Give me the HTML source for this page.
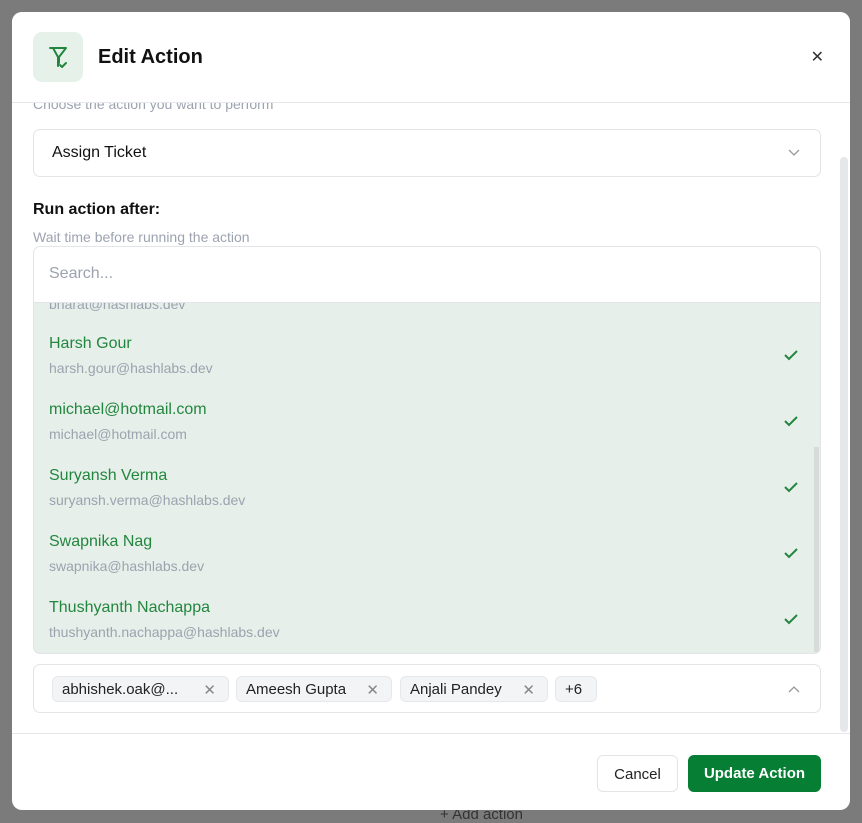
<!DOCTYPE html>
<html><head><style>
*{box-sizing:border-box;margin:0;padding:0}
body{width:862px;height:821px;background:#7b7b7b;font-family:"Liberation Sans",sans-serif;position:relative;overflow:hidden}
.bgt{position:absolute;color:#333;font-size:15px}
.modal{position:absolute;left:12px;top:12px;width:838px;height:798px;background:#fff;border-radius:10px;overflow:hidden}
.hdr{position:absolute;left:0;top:0;width:838px;height:91px;border-bottom:1px solid #e5e7eb;background:#fff;z-index:3}
.ico{position:absolute;left:21px;top:20px;width:50px;height:50px;border-radius:9px;background:#e6f1ea}
.title{position:absolute;left:86px;top:34px;font-size:20px;font-weight:bold;color:#111}
.x{position:absolute;right:26px;top:35px;font-size:16px;color:#333}
.abs{position:absolute}
.sel{left:21px;top:117px;width:788px;height:48px;border:1px solid #e2e4e8;border-radius:7px;font-size:16px;color:#111;padding:14px 18px}
.list{left:21px;top:234px;width:788px;height:408px;border:1px solid #e2e4e8;border-radius:7px;overflow:hidden;background:#e6efe9}
.search{position:absolute;left:0;top:0;width:100%;height:56px;background:#fff;border-bottom:1px solid #e2e4e8;font-size:16px;color:#9ca3af;padding:18px 15px}
.item{position:absolute;left:15px;width:760px}
.item .n{font-size:16px;color:#23863f}
.item .e{font-size:14px;color:#9ca3af;margin-top:7px}
.ck{position:absolute;left:734px;top:13px}
.tags{left:21px;top:652px;width:788px;height:49px;border:1px solid #e2e4e8;border-radius:7px}
.tag{position:absolute;top:11px;height:26px;background:#f3f4f6;border:1px solid #e5e7eb;border-radius:6px;font-size:15px;color:#222;padding:4px 9px}
.tag span{color:#888;position:absolute;right:12px;top:4px}
.foot{position:absolute;left:0;top:721px;width:838px;border-top:1px solid #e5e7eb;height:77px}
.btn{position:absolute;top:21px;height:37px;border-radius:6px;font-size:15px;padding:10px 0;text-align:center}
</style></head><body>
<div class="bgt" style="left:440px;top:806px">+ Add action</div>
<div class="modal">
<div class="hdr">
<div class="ico"><svg width="50" height="50" viewBox="0 0 50 50" fill="none" stroke="#23863f" stroke-width="2" stroke-linecap="round" stroke-linejoin="round"><path d="M17 16h16l-7 9v6"/><path d="M20 16l5 9v9"/><path d="M27 33l2 2 4-4"/></svg></div>
<div class="title">Edit Action</div>
<div class="x">✕</div>
</div>
<div class="abs" style="left:21px;top:84px;font-size:14px;color:#9ca3af">Choose the action you want to perform</div>
<div class="abs sel">Assign Ticket<svg style="position:absolute;right:20px;top:19px" width="12" height="8" viewBox="0 0 12 8"><path d="M1 1l5 5 5-5" stroke="#999" fill="none" stroke-width="1.3"/></svg></div>
<div class="abs" style="left:21px;top:189px;font-size:16px;font-weight:bold;color:#111">Run action after:</div>
<div class="abs" style="left:21px;top:217px;font-size:14px;color:#9ca3af">Wait time before running the action</div>
<div class="abs list">
<div class="item" style="top:42px"><div class="e">bharat@hashlabs.dev</div></div>
<div class="item" style="top:88px"><div class="n">Harsh Gour</div><div class="e">harsh.gour@hashlabs.dev</div><svg class="ck" width="16" height="14" viewBox="0 0 16 14"><path d="M2 7l4 4 8-8" stroke="#23863f" stroke-width="2" fill="none"/></svg></div>
<div class="item" style="top:154px"><div class="n">michael@hotmail.com</div><div class="e">michael@hotmail.com</div><svg class="ck" width="16" height="14" viewBox="0 0 16 14"><path d="M2 7l4 4 8-8" stroke="#23863f" stroke-width="2" fill="none"/></svg></div>
<div class="item" style="top:220px"><div class="n">Suryansh Verma</div><div class="e">suryansh.verma@hashlabs.dev</div><svg class="ck" width="16" height="14" viewBox="0 0 16 14"><path d="M2 7l4 4 8-8" stroke="#23863f" stroke-width="2" fill="none"/></svg></div>
<div class="item" style="top:286px"><div class="n">Swapnika Nag</div><div class="e">swapnika@hashlabs.dev</div><svg class="ck" width="16" height="14" viewBox="0 0 16 14"><path d="M2 7l4 4 8-8" stroke="#23863f" stroke-width="2" fill="none"/></svg></div>
<div class="item" style="top:352px"><div class="n">Thushyanth Nachappa</div><div class="e">thushyanth.nachappa@hashlabs.dev</div><svg class="ck" width="16" height="14" viewBox="0 0 16 14"><path d="M2 7l4 4 8-8" stroke="#23863f" stroke-width="2" fill="none"/></svg></div>
<div class="search">Search...</div>
<div style="position:absolute;right:1px;top:200px;width:5px;height:205px;background:#d7dcd9"></div>
</div>
<div class="abs tags">
<div class="tag" style="left:18px;width:177px">abhishek.oak@...<span>✕</span></div>
<div class="tag" style="left:202px;width:156px">Ameesh Gupta<span>✕</span></div>
<div class="tag" style="left:366px;width:148px">Anjali Pandey<span>✕</span></div>
<div class="tag" style="left:521px;width:42px">+6</div>
<svg style="position:absolute;right:20px;top:20px" width="12" height="8" viewBox="0 0 12 8"><path d="M1 7l5-5 5 5" stroke="#999" fill="none" stroke-width="1.3"/></svg>
</div>
<div style="position:absolute;left:828px;top:145px;width:8px;height:575px;background:#e5e7eb;border-radius:4px"></div>
<div class="foot">
<div class="btn" style="left:585px;width:81px;border:1px solid #e2e4e8;color:#222">Cancel</div>
<div class="btn" style="left:676px;width:133px;background:#067f34;color:#fff;font-weight:bold">Update Action</div>
</div>
</div>
</body></html>
